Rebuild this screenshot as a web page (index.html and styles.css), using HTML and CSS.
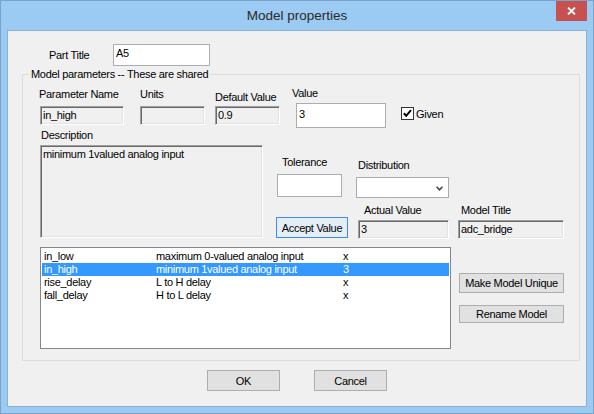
FILE: index.html
```html
<!DOCTYPE html>
<html>
<head>
<meta charset="utf-8">
<link rel="stylesheet" href="styles.css">
</head>
<body>
<div class="window">
  <div class="titlebar">
    <span></span>
    <div class="title">Model properties</div>
    <div class="close"><svg width="9" height="8" viewBox="0 0 9 8"><path d="M1 0.5 L8 7.5 M8 0.5 L1 7.5" stroke="#fff" stroke-width="1.8" fill="none"/></svg></div>
  </div>
  <div class="client">
    <div class="part-row">
      <span class="part-label">Part Title</span>
      <div class="edit part-edit">A5</div>
    </div>
    <div class="group">
      <span class="legend">Model parameters -- These are shared</span>
      <div class="fields-row">
        <div class="field f-param">
          <div class="lbl l-param">Parameter Name</div>
          <div class="sunken s-param">in_high</div>
        </div>
        <div class="field f-units">
          <div class="lbl">Units</div>
          <div class="sunken s-units"></div>
        </div>
        <div class="field f-default">
          <div class="lbl">Default Value</div>
          <div class="sunken s-default">0.9</div>
        </div>
        <div class="field f-value">
          <div class="lbl l-value">Value</div>
          <div class="edit value-edit">3</div>
        </div>
        <div class="given">
          <svg class="check" width="13" height="13" viewBox="0 0 13 13"><rect x="0.5" y="0.5" width="12" height="12" fill="#fff" stroke="#333"/><path d="M2.8 6.2 L5.2 8.8 L10 3.2" stroke="#000" stroke-width="2" fill="none"/></svg>
          <span>Given</span>
        </div>
      </div>
      <div class="desc-row">
        <div class="field f-desc">
          <div class="lbl l-desc">Description</div>
          <div class="sunken s-desc">minimum 1valued analog input</div>
        </div>
        <div class="right">
          <div class="row-a">
            <div class="field f-tol">
              <div class="lbl l-tol">Tolerance</div>
              <div class="edit tol-edit"></div>
            </div>
            <div class="field f-dist">
              <div class="lbl l-dist">Distribution</div>
              <div class="combo"><svg width="7" height="5" viewBox="0 0 7 5"><path d="M0.6 0.8 L3.5 3.8 L6.4 0.8" stroke="#444" stroke-width="1.6" fill="none"/></svg></div>
            </div>
          </div>
          <div class="row-b">
            <button class="btn accept">Accept Value</button>
            <div class="field f-actual">
              <div class="lbl l-actual">Actual Value</div>
              <div class="sunken s-actual">3</div>
            </div>
            <div class="field f-model">
              <div class="lbl l-model">Model Title</div>
              <div class="sunken s-model">adc_bridge</div>
            </div>
          </div>
        </div>
      </div>
      <div class="list-row">
        <div class="list">
          <div class="li"><span>in_low</span><span>maximum 0-valued analog input</span><span>x</span></div>
          <div class="li sel"><span>in_high</span><span>minimum 1valued analog input</span><span>3</span></div>
          <div class="li"><span>rise_delay</span><span>L to H delay</span><span>x</span></div>
          <div class="li"><span>fall_delay</span><span>H to L delay</span><span>x</span></div>
        </div>
        <div class="side-btns">
          <button class="btn unique">Make Model Unique</button>
          <button class="btn rename">Rename Model</button>
        </div>
      </div>
    </div>
    <div class="footer">
      <button class="btn foot">OK</button>
      <button class="btn foot">Cancel</button>
    </div>
  </div>
</div>
</body>
</html>
```
FILE: styles.css
```css
html, body { margin: 0; padding: 0; }
body { background: #fff; }

.window {
  width: 594px;
  height: 414px;
  box-sizing: border-box;
  border: 1px solid #7ba2c8;
  background: #9bcaf2;
  font-family: "Liberation Sans", Arial, sans-serif;
  font-size: 11px;
  letter-spacing: -0.3px;
  color: #000;
  display: flex;
  flex-direction: column;
}

.titlebar {
  height: 29px;
  flex: none;
  display: grid;
  grid-template-columns: 1fr auto 1fr;
  letter-spacing: 0;
}
.title {
  font-size: 13.5px;
  line-height: 28px;
  padding-top: 1px;
  color: #2a2a2a;
}
.close {
  justify-self: end;
  align-self: start;
  width: 31px;
  height: 20px;
  margin-right: 6px;
  background: #c75050;
  display: flex;
  align-items: center;
  justify-content: center;
}

.client {
  flex: 1;
  margin: 0 6px 6px;
  border: 1px solid #8cb0d3;
  background: #f0f0f0;
}

.part-row {
  display: flex;
  align-items: center;
  margin-top: 13px;
  height: 22px;
}
.part-label { margin-left: 41px; width: 64px; }

.edit {
  box-sizing: border-box;
  background: #fff;
  border: 1px solid #abadb3;
  padding-left: 2px;
  white-space: nowrap;
}
.part-edit { width: 97px; height: 22px; line-height: 16px; }

.sunken {
  box-sizing: border-box;
  background: #f0f0f0;
  border-top: 1px solid #a0a0a0;
  border-left: 1px solid #a0a0a0;
  border-right: 1px solid #ffffff;
  border-bottom: 1px solid #ffffff;
  box-shadow: inset 1px 1px 0 #696969, inset -1px -1px 0 #e3e3e3;
  padding-left: 2px;
  white-space: nowrap;
}

.group {
  box-sizing: border-box;
  margin: 8px 0 0 14px;
  width: 558px;
  height: 287px;
  border: 1px solid #dcdcdc;
}
.legend {
  display: block;
  width: max-content;
  margin: -7px 0 0 6px;
  padding: 0 2px;
  background: #f0f0f0;
  height: 13px;
  line-height: 13px;
}

.lbl { height: 13px; line-height: 13px; white-space: nowrap; }
.field { display: flex; flex-direction: column; }

.fields-row {
  display: flex;
  align-items: flex-start;
  padding-left: 17px;
}
.f-param { margin-top: 7px; }
.l-param { margin-left: -1px; }
.s-param { margin-top: 5px; width: 84px; height: 19px; line-height: 17px; }
.f-units { margin-top: 7px; margin-left: 16px; }
.s-units { margin-top: 5px; width: 65px; height: 19px; }
.f-default { margin-top: 10px; margin-left: 10px; }
.s-default { margin-top: 2px; width: 65px; height: 19px; line-height: 17px; }
.f-value { margin-top: 6px; margin-left: 16px; }
.l-value { margin-left: -4px; }
.value-edit { margin-top: 3px; width: 90px; height: 25px; line-height: 21px; }
.given {
  margin-top: 26px;
  margin-left: 15px;
  display: flex;
  align-items: center;
  gap: 2px;
  height: 13px;
}
.check { display: block; }

.desc-row {
  display: flex;
  align-items: flex-start;
  padding-left: 17px;
}
.f-desc { margin-top: 1px; }
.l-desc { margin-left: 1px; }
.s-desc { margin-top: 3px; width: 223px; height: 93px; line-height: 13px; padding-top: 2px; }

.right { margin-left: 13px; display: flex; flex-direction: column; }
.row-a, .row-b { display: flex; align-items: flex-start; }
.f-tol { margin-top: 28px; margin-left: 1px; }
.l-tol { margin-left: 5px; }
.tol-edit { margin-top: 5px; width: 65px; height: 23px; }
.f-dist { margin-top: 31px; margin-left: 14px; }
.l-dist { margin-left: 2px; }
.combo {
  box-sizing: border-box;
  margin-top: 5px;
  width: 93px;
  height: 21px;
  background: #fff;
  border: 1px solid #acacac;
  display: flex;
  align-items: center;
  justify-content: flex-end;
  padding-right: 5px;
  padding-top: 1px;
}
.combo svg { display: block; }

.btn {
  box-sizing: border-box;
  margin: 0;
  padding: 0;
  background: #e1e1e1;
  border: 1px solid #adadad;
  font: inherit;
  letter-spacing: inherit;
  color: #000;
  white-space: nowrap;
}
.accept {
  margin-top: 19px;
  width: 72px;
  height: 21px;
  border-color: #3d8ee0;
  background: #e5eef7;
}
.f-actual { margin-top: 6px; margin-left: 10px; }
.l-actual { margin-left: 6px; }
.s-actual { margin-top: 3px; width: 91px; height: 19px; line-height: 17px; }
.f-model { margin-top: 6px; margin-left: 9px; }
.l-model { margin-left: 3px; }
.s-model { margin-top: 3px; width: 106px; height: 19px; line-height: 17px; }

.list-row {
  display: flex;
  align-items: flex-start;
  padding-left: 17px;
  margin-top: 8px;
}
.list {
  box-sizing: border-box;
  width: 411px;
  height: 102px;
  background: #fff;
  border: 1px solid #828790;
  padding: 2px 1px 0;
}
.li {
  display: grid;
  grid-template-columns: 112px 187px 1fr;
  height: 13px;
  line-height: 13px;
  padding-left: 2px;
  white-space: nowrap;
}
.li.sel { background: #3399ff; color: #fff; }

.side-btns { margin-left: 8px; display: flex; flex-direction: column; }
.unique { margin-top: 26px; width: 105px; height: 20px; }
.rename { margin-top: 12px; width: 105px; height: 18px; }

.footer {
  display: flex;
  justify-content: center;
  gap: 34px;
  margin-top: 9px;
}
.foot { width: 73px; height: 21px; }
```
